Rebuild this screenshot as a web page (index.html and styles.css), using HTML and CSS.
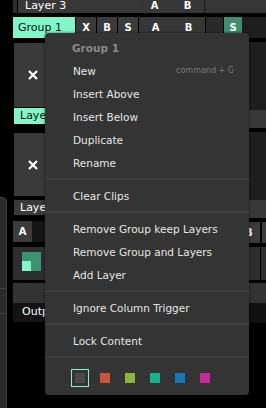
FILE: index.html
```html
<!DOCTYPE html>
<html lang="en">
<head>
    <meta charset="UTF-8">
    <meta name="viewport" content="width=device-width, initial-scale=1.0">
    <title>Group menu</title>
    <link rel="stylesheet" href="styles.css">
</head>
<body>
<div class="app">
    <div class="gutter">
        <div class="side-panel">
            <div class="side-line"></div>
            <div class="side-line"></div>
        </div>
    </div>

    <div class="deck">
        <!-- Layer row above the group -->
        <div class="row layer-row">
            <div class="edge"></div>
            <div class="layer-name">Layer 3</div>
            <div class="cell">A</div>
            <div class="cell">B</div>
            <div class="rest"></div>
        </div>

        <!-- Group header -->
        <div class="row group-row">
            <div class="group-name">Group 1</div>
            <div class="btn">X</div>
            <div class="btn">B</div>
            <div class="btn">S</div>
            <div class="cell">A</div>
            <div class="cell">B</div>
            <div class="fill"></div>
            <div class="solo">S</div>
            <div class="rest dark"></div>
        </div>

        <div class="body">
            <div class="left-col">
                <div class="group-section">
                    <div class="group-bar"></div>
                    <div class="group-stack">
                        <div class="clip clip-first">
                            <svg width="10" height="10" viewBox="0 0 10 10"><path d="M1 1L9 9M9 1L1 9" stroke="#fff" stroke-width="2.2"/></svg>
                        </div>
                        <div class="label label-active">Layer 1</div>
                        <div class="clip clip-second">
                            <svg width="10" height="10" viewBox="0 0 10 10"><path d="M1 1L9 9M9 1L1 9" stroke="#fff" stroke-width="2.2"/></svg>
                        </div>
                        <div class="label">Layer 2</div>
                    </div>
                </div>
                <div class="column-row">
                    <div class="col-btn">A</div>
                    <div class="col-dark"></div>
                </div>
                <div class="dash">
                    <div class="preview"><div class="preview-inner"></div></div>
                </div>
                <div class="strip"></div>
                <div class="output">Output</div>
            </div>

            <div class="mid-col"></div>

            <div class="right-col">
                <div class="r-dark r-first"></div>
                <div class="r-grey"></div>
                <div class="r-dark"></div>
                <div class="r-grey"></div>
                <div class="r-buttons">
                    <div class="r-btn">B</div>
                    <div class="r-btn r-btn-next"></div>
                </div>
                <div class="r-dash"><div class="r-dash-cell"></div><div class="r-dash-cell"></div></div>
                <div class="strip"></div>
                <div class="r-out"></div>
            </div>
        </div>
    </div>

    <!-- Context menu -->
    <div class="menu">
        <div class="menu-title">Group 1</div>
        <div class="menu-item">New <span class="shortcut">command + G</span></div>
        <div class="menu-item">Insert Above</div>
        <div class="menu-item">Insert Below</div>
        <div class="menu-item">Duplicate</div>
        <div class="menu-item">Rename</div>
        <div class="menu-sep"></div>
        <div class="menu-item">Clear Clips</div>
        <div class="menu-sep"></div>
        <div class="menu-item">Remove Group keep Layers</div>
        <div class="menu-item">Remove Group and Layers</div>
        <div class="menu-item">Add Layer</div>
        <div class="menu-sep"></div>
        <div class="menu-item">Ignore Column Trigger</div>
        <div class="menu-sep"></div>
        <div class="menu-item">Lock Content</div>
        <div class="menu-sep"></div>
        <div class="swatches">
            <div class="swatch-cell"><div class="swatch-current"><div class="swatch swatch-grey"></div></div></div>
            <div class="swatch-cell"><div class="swatch" style="background-color: #c9553a;"></div></div>
            <div class="swatch-cell"><div class="swatch" style="background-color: #8db53a;"></div></div>
            <div class="swatch-cell"><div class="swatch" style="background-color: #17b48b;"></div></div>
            <div class="swatch-cell"><div class="swatch" style="background-color: #1479b5;"></div></div>
            <div class="swatch-cell"><div class="swatch" style="background-color: #c52a9b;"></div></div>
        </div>
    </div>
</div>
</body>
</html>
```

FILE: styles.css
```css
/* General styles */
body {
    margin: 0;
    padding: 0;
    background-color: #000;
    font-family: 'DejaVu Sans', sans-serif;
    color: #fff;
}

.app {
    position: relative;
    display: flex;
    width: 266px;
    height: 408px;
    overflow: hidden;
    background-color: #000;
}

/* Left gutter with the side panel */
.gutter {
    width: 13px;
    display: flex;
    flex-direction: column;
    justify-content: flex-end;
}

.side-panel {
    width: 7px;
    height: 211px;
    background-color: #2b2b2b;
    border-top: 1px solid #3c3c3c;
    border-right: 1px solid #3c3c3c;
    border-top-right-radius: 5px;
    padding-top: 90px;
    box-sizing: border-box;
}

.side-line {
    height: 1px;
    background-color: #444;
    margin-bottom: 24px;
}

/* Deck */
.deck {
    flex: 1;
    display: flex;
    flex-direction: column;
}

.row {
    display: flex;
    font-size: 11px;
}

.layer-row {
    height: 22px;
    margin-top: -9px;
    line-height: 29px;
}

.edge {
    width: 4px;
    margin-right: 1px;
    background-color: #2e2e2e;
}

.layer-name {
    width: 120px;
    padding-left: 7px;
    box-sizing: border-box;
    background-color: #383838;
}

.cell {
    width: 33px;
    text-align: center;
    font-weight: bold;
    font-size: 10px;
    background-color: #373737;
}

.rest {
    flex: 1;
    background-color: #363636;
    border-left: 1px solid #1a1a1a;
}

.group-row {
    height: 21px;
    margin-top: 4px;
    line-height: 21px;
}

.group-name {
    width: 62px;
    padding-left: 5px;
    box-sizing: border-box;
    background-color: #80f6c9;
    color: #111;
    margin-right: 1px;
}

.btn {
    width: 20px;
    margin-right: 1px;
    text-align: center;
    font-weight: bold;
    font-size: 10px;
    background-color: #3b3b3b;
}

.fill {
    width: 17px;
    margin-left: 1px;
    margin-right: 1px;
    background-color: #2a2a2a;
}

.solo {
    width: 18px;
    text-align: center;
    font-weight: bold;
    font-size: 10px;
    background-color: #3f8e70;
}

.dark {
    background-color: #1e1e1e;
    border-left: none;
}

/* Body columns */
.body {
    flex: 1;
    display: flex;
}

.left-col {
    width: 32px;
    display: flex;
    flex-direction: column;
}

.group-section {
    display: flex;
    height: 177px;
}

.group-bar {
    width: 4px;
    background-color: #80f6c9;
    margin-right: 1px;
}

.group-stack {
    flex: 1;
    display: flex;
    flex-direction: column;
}

.clip {
    display: flex;
    align-items: center;
    padding-left: 14px;
    background-color: #3a3a3a;
}

.clip-first {
    height: 64px;
    margin-top: 5px;
}

.clip-second {
    height: 63px;
    margin-top: 9px;
}

.label {
    height: 15px;
    margin-top: 4px;
    padding-left: 6px;
    font-size: 11px;
    line-height: 16px;
    white-space: nowrap;
    overflow: hidden;
    background-color: #3a3a3a;
}

.label-active {
    height: 16px;
    margin-top: 1px;
    background-color: #80f6c9;
    color: #111;
}

.column-row {
    display: flex;
    height: 21px;
    margin-top: 6px;
}

.col-btn {
    width: 19px;
    text-align: center;
    font-size: 10px;
    font-weight: bold;
    line-height: 21px;
    background-color: #3b3b3b;
}

.col-dark {
    flex: 1;
    background-color: #151515;
}

.dash {
    height: 33px;
    margin-top: 5px;
    padding: 5px 0 0 9px;
    box-sizing: border-box;
    background-color: #2e2e2e;
}

.preview {
    width: 19px;
    height: 19px;
    display: flex;
    align-items: flex-end;
    background-color: #3d9272;
}

.preview-inner {
    width: 9px;
    height: 10px;
    background-color: #80f6c9;
}

.strip {
    height: 20px;
    margin-top: 3px;
    background-color: #333;
}

.output {
    height: 19px;
    padding-left: 9px;
    font-size: 11px;
    line-height: 18px;
    white-space: nowrap;
    overflow: hidden;
    background-color: #141414;
}

.mid-col {
    flex: 1;
    background-color: #000;
}

.right-col {
    width: 17px;
    display: flex;
    flex-direction: column;
}

.r-dark {
    height: 68px;
    margin-top: 4px;
    background-color: #1e1e1e;
}

.r-grey {
    height: 18px;
    background-color: #383838;
}

.r-buttons {
    display: flex;
    height: 21px;
    margin-top: 4px;
}

.r-btn {
    width: 11px;
    font-size: 10px;
    font-weight: bold;
    line-height: 21px;
    text-indent: -4px;
    overflow: hidden;
    background-color: #3b3b3b;
}

.r-btn-next {
    flex: 1;
    margin-left: 2px;
}

.r-dash {
    display: flex;
    height: 33px;
    margin-top: 4px;
}

.r-dash-cell {
    width: 11px;
    background-color: #2e2e2e;
}

.r-dash-cell + .r-dash-cell {
    flex: 1;
    margin-left: 1px;
}

.r-out {
    height: 20px;
    background-color: #111;
}

/* Context menu */
.menu {
    position: absolute;
    left: 45px;
    top: 33px;
    width: 204px;
    height: 362px;
    padding-top: 4px;
    box-sizing: border-box;
    background-color: #343434;
    border-radius: 4px;
    box-shadow: 0 0 3px rgba(0, 0, 0, 0.6);
}

.menu-title {
    height: 22px;
    padding-left: 27px;
    font-size: 10.5px;
    font-weight: bold;
    line-height: 22px;
    color: #8a8a8a;
}

.menu-item {
    display: flex;
    justify-content: space-between;
    align-items: center;
    height: 23px;
    padding: 0 15px 0 28px;
    font-size: 10.5px;
    color: #e6e6e6;
}

.shortcut {
    font-size: 8px;
    color: #7a7a7a;
}

.menu-sep {
    height: 2px;
    margin: 4px 0;
    background-color: #3f3f3f;
}

.swatches {
    display: flex;
    align-items: center;
    height: 31px;
    padding-left: 22px;
}

.swatch-cell {
    width: 25px;
    display: flex;
    justify-content: center;
}

.swatch {
    width: 10px;
    height: 10px;
}

.swatch-current {
    width: 18px;
    height: 18px;
    display: flex;
    align-items: center;
    justify-content: center;
    border: 1px solid #8ef0cc;
    box-sizing: border-box;
}

.swatch-grey {
    width: 10px;
    height: 10px;
    background-color: #4a4a4a;
}
```
